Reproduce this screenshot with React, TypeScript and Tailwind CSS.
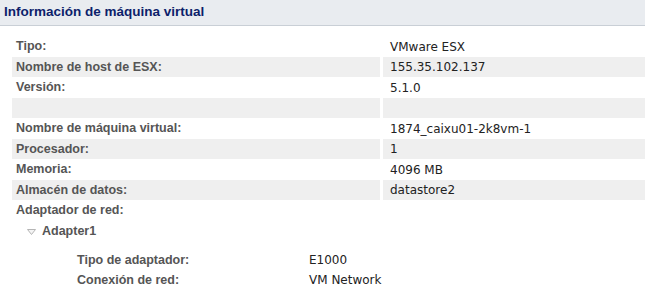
import React from 'react'

const rows: { label: string; value: string }[] = [
  { label: 'Tipo:', value: 'VMware ESX' },
  { label: 'Nombre de host de ESX:', value: '155.35.102.137' },
  { label: 'Versión:', value: '5.1.0' },
  { label: '', value: '' },
  { label: 'Nombre de máquina virtual:', value: '1874_caixu01-2k8vm-1' },
  { label: 'Procesador:', value: '1' },
  { label: 'Memoria:', value: '4096 MB' },
  { label: 'Almacén de datos:', value: 'datastore2' },
]

const adapter = [
  { label: 'Tipo de adaptador:', value: 'E1000' },
  { label: 'Conexión de red:', value: 'VM Network' },
]

const bold = "font-['Liberation_Sans',Arial,sans-serif] text-[12.5px] font-bold text-[#555]"

export default function App(): JSX.Element {
  return (
    <div className="w-[645px] h-[289px] bg-white overflow-hidden font-['DejaVu_Sans',sans-serif] text-[12px]">
      <div className="h-[26px] bg-[#e9ecf0] border-b border-[#c9cfd6] flex items-center pl-[4px]">
        <span className="font-['Liberation_Sans',Arial,sans-serif] text-[13.5px] font-bold text-[#0d1f6b]">
          Información de máquina virtual
        </span>
      </div>

      <div className="pt-[10px]">
        {rows.map((r, i) => {
          const striped = i % 2 === 1
          return (
            <div key={i} className={`flex ${striped ? 'h-[20px]' : 'h-[21px]'}`}>
              <div
                className={`ml-[12px] w-[368px] pl-[4px] flex items-center ${bold} ${
                  striped ? 'bg-[#efefef]' : ''
                }`}
              >
                {r.label}
              </div>
              <div
                className={`ml-[3px] flex-1 pl-[7px] flex items-center text-[#222] ${
                  striped ? 'bg-[#efefef]' : ''
                }`}
              >
                {r.value}
              </div>
            </div>
          )
        })}

        <div className={`h-[21px] pl-[16px] flex items-center ${bold}`}>Adaptador de red:</div>
        <div className={`h-[21px] pl-[27px] flex items-center ${bold}`}>
          <svg width="9" height="6" viewBox="0 0 9 6" className="mr-[6px]">
            <path d="M0.5 0.5 L8.5 0.5 L4.5 5.5 Z" fill="#f4f4f4" stroke="#b5b5b5" strokeWidth="1" />
          </svg>
          Adapter1
        </div>

        <div className="pt-[8px]">
          {adapter.map((a) => (
            <div key={a.label} className="h-[20px] flex items-center">
              <div className={`ml-[77px] w-[232px] ${bold}`}>{a.label}</div>
              <div className="text-[#222]">{a.value}</div>
            </div>
          ))}
        </div>
      </div>
    </div>
  )
}
